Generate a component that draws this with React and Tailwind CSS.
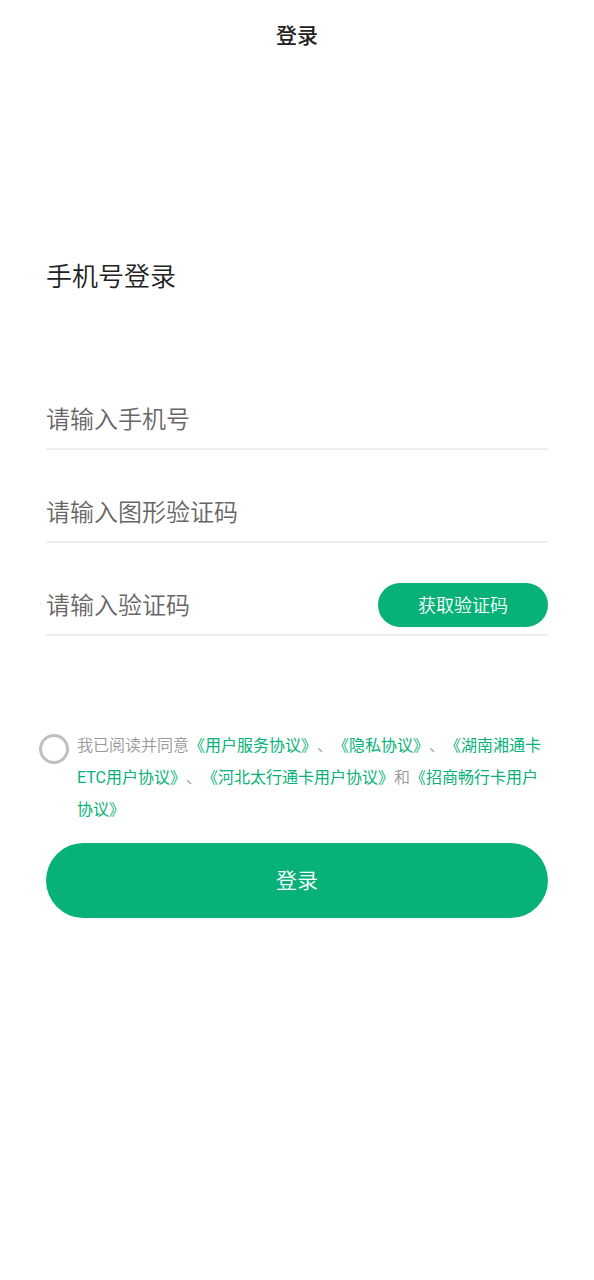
import React from "react";

const agreements = [
  { text: "《用户服务协议》", after: "、" },
  { text: "《隐私协议》", after: "、" },
  { text: "《湖南湘通卡ETC用户协议》", after: "、" },
  { text: "《河北太行通卡用户协议》", after: "和" },
  { text: "《招商畅行卡用户协议》", after: "" },
];

function Field({ id, label, type, children }) {
  return (
    <div className="flex h-[93px] items-end border-b-2 border-[#eeeeee]">
      <input
        id={id}
        type={type}
        aria-label={label}
        placeholder={label}
        className="h-14 min-w-0 flex-1 bg-transparent text-2xl text-[#333333] outline-none placeholder:text-[#666666]"
      />
      {children}
    </div>
  );
}

export default function App() {
  return (
    <div className="min-h-screen bg-white font-['Roboto','Noto_Sans_CJK_SC',sans-serif] font-[350] text-[#222222] [text-spacing-trim:space-all]" lang="zh-CN">
      <header className="flex h-[74px] items-center justify-center">
        <h1 className="text-[21px] font-medium">登录</h1>
      </header>
      <main className="px-[46px] pt-[181px]">
        <h2 className="text-[26px] leading-[44px] font-[350]">手机号登录</h2>
        <form onSubmit={(e) => e.preventDefault()}>
          <div className="pt-[58px]">
            <Field id="phone" type="tel" label="请输入手机号" />
            <Field id="captcha" type="text" label="请输入图形验证码" />
            <Field id="code" type="text" label="请输入验证码">
              <button type="button" className="mb-[7px] h-[44px] w-[170px] rounded-full bg-[#07b178] pt-[2px] text-lg text-white">
                获取验证码
              </button>
            </Field>
          </div>
          <div className="-ml-[7px] flex pt-[94px]">
            <input
              id="agree"
              type="checkbox"
              className="mt-1 mr-2 size-[30px] shrink-0 appearance-none rounded-full border-3 border-[#bfbfbf] checked:bg-[#07b178]"
            />
            <label htmlFor="agree" className="text-base leading-8 text-[#999999]">
              我已阅读并同意
              {agreements.map((a) => (
                <React.Fragment key={a.text}>
                  <a href="#agreement" className="font-normal text-[#07b178]">{a.text}</a>
                  {a.after}
                </React.Fragment>
              ))}
            </label>
          </div>
          <button type="submit" className="mt-[17px] h-[75px] w-full rounded-full bg-[#07b178] pt-[2px] text-[21px] text-white">
            登录
          </button>
        </form>
      </main>
    </div>
  );
}
